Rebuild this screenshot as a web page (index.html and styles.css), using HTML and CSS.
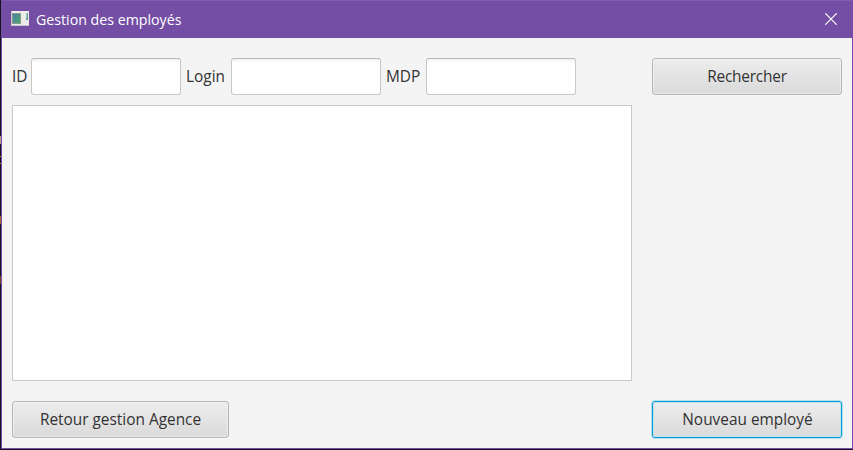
FILE: index.html
```html
<!DOCTYPE html>
<html lang="fr">
<head>
<meta charset="utf-8">
<title>Gestion des employés</title>
<link rel="stylesheet" href="styles.css">
</head>
<body>
<div class="backdrop"><i class="fleck f1"></i><i class="fleck f2"></i><i class="fleck f3"></i><i class="fleck f4"></i></div>
<div class="window">
  <header class="titlebar">
    <svg class="app-icon" width="18" height="15" viewBox="0 0 18 15" shape-rendering="crispEdges">
      <defs><linearGradient id="g" x1="0" y1="0" x2="1" y2="1"><stop offset="0" stop-color="#4a7fa8"/><stop offset="1" stop-color="#4fa869"/></linearGradient></defs>
      <rect width="18" height="15" fill="#ecece9"/>
      <path d="M0 14.500h18M.5 0v15" stroke="#c9c5cc"/>
      <rect x="1" y="2" width="9" height="11" fill="#8b9994"/>
      <rect x="2" y="3" width="7" height="9" fill="url(#g)"/>
      <rect x="15" y="2" width="2" height="7" fill="#62a38b"/>
      <rect x="15" y="2" width="1" height="5" fill="#a6c3dc"/>
    </svg>
    <h1 class="title"><span>Gestion des employés</span></h1>
    <svg class="close" width="12" height="12" viewBox="0 0 12 12"><path d="M.3.3l11.400 11.400M11.700.3L.3 11.700" stroke="#fff" stroke-width="1.200"/></svg>
  </header>
  <main class="content">
    <div class="search">
      <label class="l-id" for="id">ID</label><input id="id" type="text">
      <label class="l-login" for="login">Login</label><input id="login" type="text">
      <label class="l-mdp" for="mdp">MDP</label><input id="mdp" type="text">
      <button class="btn search-btn" type="button"><span>Rechercher</span></button>
    </div>
    <div class="list"></div>
    <div class="actions">
      <button class="btn back" type="button"><span>Retour gestion Agence</span></button>
      <button class="btn primary" type="button"><span>Nouveau employé</span></button>
    </div>
  </main>
</div>
</body>
</html>
```
FILE: styles.css
```css
* { box-sizing: border-box; }
body {
  margin: 0;
  width: 853px;
  height: 450px;
  overflow: hidden;
  background: #17131e;
  font: 15.400px/20px "Open Sans", "Noto Sans", sans-serif;
  color: #333;
  display: flex;
}
.backdrop { position: relative; width: 1px; height: 450px; }
.fleck { position: absolute; left: 0; width: 1px; }
.f1 { top: 136px; height: 8px; background: #b99a86; }
.f2 { top: 156px; height: 8px; border: solid #d68b1c; border-width: 1px 0; }
.f3 { top: 216px; height: 8px; background: #a5622a; }
.f4 { top: 276px; height: 8px; background: #71442f; }
.window {
  width: 852px;
  height: 449px;
  border: 1px solid #744da9;
  border-top: 0;
  background: #f4f4f4;
}
.titlebar {
  height: 38px;
  padding: 0 15px 2px 9px;
  border-top: 1px solid #805cb0;
  background: #744da5;
  display: flex;
  align-items: center;
}
.title {
  margin: 3px auto 0 7px;
  font-size: 14.200px;
  font-weight: 400;
  color: #fff;
}
.content { padding: 20px 10px 10px; }
.search { display: flex; align-items: center; height: 37px; }
label { flex: none; }
.l-id { width: 19px; }
.l-login { width: 50px; padding-left: 5px; }
.l-mdp { width: 45px; padding-left: 5px; }
input {
  width: 150px;
  height: 37px;
  padding: 0 10px;
  border: 1px solid #c8c8c8;
  border-top-color: #b8b8b8;
  border-radius: 3px;
  background: linear-gradient(#f1f1f1, #fff 4px);
  font: inherit;
  outline: 0;
}
.btn {
  height: 37px;
  padding: 0;
  border: 1px solid #b5b5b5;
  border-radius: 3px;
  background: linear-gradient(#ededed, #dadada);
  box-shadow: inset 0 0 0 1px rgba(255,255,255,.4), 0 1px 0 #fafafa;
  font: inherit;
  color: #333;
}
.search-btn { width: 190px; margin-left: auto; letter-spacing: -.2px; }
.list { width: 620px; height: 276px; margin: 10px 0 20px; background: #fff; border: 1px solid #c8c8c8; }
.actions { display: flex; justify-content: space-between; }
.back { width: 217px; }
.primary {
  width: 190px;
  padding-left: 1px;
  border-color: #039ed3;
  box-shadow: 0 0 0 1px #b4dfee, inset 0 0 0 1px #c4e0ea;
}
```
